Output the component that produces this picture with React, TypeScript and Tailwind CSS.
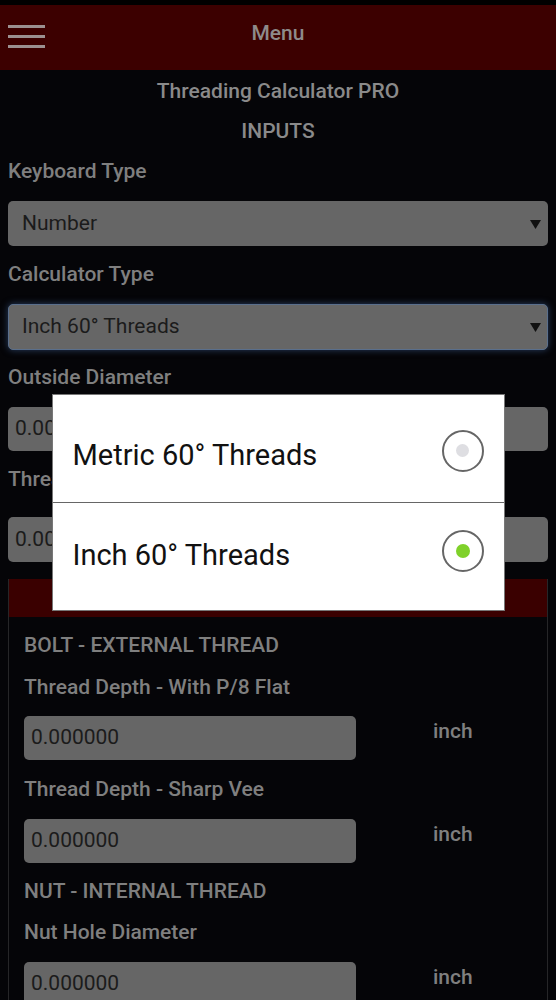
import { useState } from "react";

type Option = { key: string; label: string };

const calcOptions: Option[] = [
  { key: "metric", label: "Metric 60° Threads" },
  { key: "inch", label: "Inch 60° Threads" },
];

function SelectBox({ value, focused }: { value: string; focused?: boolean }) {
  return (
    <div
      className={
        focused
          ? "mt-[10px] flex h-[46px] items-center justify-between rounded-[5px] border border-[#5a6f8c] bg-[#666666] pl-[13px] pr-[6px] shadow-[0_0_7px_rgba(70,110,170,0.55)]"
          : "mt-[10px] flex h-[45px] items-center justify-between rounded-[5px] bg-[#666666] pl-[14px] pr-[7px]"
      }
    >
      <span className="text-[21px] text-[#1b1b1b]">{value}</span>
      <svg width="11" height="10" viewBox="0 0 11 10">
        <path d="M0 1h11L5.5 10z" fill="#111" />
      </svg>
    </div>
  );
}

function Label({ text, className }: { text: string; className?: string }) {
  return (
    <div
      className={
        "h-10 text-[21px] font-medium leading-10 text-[#7f7f7f] " +
        (className ?? "")
      }
    >
      {text}
    </div>
  );
}

function ResultRow({ className }: { className?: string }) {
  return (
    <div className={"flex items-start " + (className ?? "")}>
      <div className="flex h-[44px] w-[332px] items-center rounded-[5px] bg-[#666666] px-[7px] text-[21px] text-[#1b1b1b]">
        0.000000
      </div>
      <span className="ml-[77px] text-[21px] font-medium leading-[30px] text-[#7f7f7f]">
        inch
      </span>
    </div>
  );
}

export default function App() {
  const [calcType, setCalcType] = useState("inch");

  return (
    <div className="relative min-h-screen overflow-hidden bg-[#050508] font-['Roboto',sans-serif]">
      <div className="h-[5px] bg-black" />
      <header className="grid h-[65px] grid-cols-[1fr_auto_1fr] items-start bg-[#3c0000]">
        <div className="flex flex-col gap-[7px] pl-2 pt-[20px]">
          <span className="h-[3px] w-[37px] bg-[#9c9090]" />
          <span className="h-[3px] w-[37px] bg-[#9c9090]" />
          <span className="h-[3px] w-[37px] bg-[#9c9090]" />
        </div>
        <div className="pt-[14px] text-[21px] font-medium leading-[28px] text-[#8e8a8a]">
          Menu
        </div>
        <div />
      </header>

      <main className="px-2">
        <div className="mt-px h-10 text-center text-[21px] font-medium leading-10 text-[#8a8a8a]">
          Threading Calculator PRO
        </div>
        <div className="h-10 text-center text-[21px] font-medium leading-10 text-[#8a8a8a]">
          INPUTS
        </div>

        <Label text="Keyboard Type" />
        <SelectBox value="Number" />

        <Label text="Calculator Type" className="mt-2" />
        <SelectBox
          value={calcOptions.find((o) => o.key === calcType)?.label ?? ""}
          focused
        />

        <Label text="Outside Diameter" className="mt-[7px]" />
        <div className="mt-[10px] flex h-[44px] items-center rounded-[5px] bg-[#666666] px-[7px] text-[21px] text-[#1b1b1b]">
          0.000000
        </div>

        <Label text="Threads Per Inch" className="mt-2" />
        <div className="mt-[18px] flex h-[45px] items-center rounded-[5px] bg-[#666666] px-[7px] text-[21px] text-[#1b1b1b]">
          0.000000
        </div>

        <section className="mt-[17px] border border-t-0 border-[#262628]">
          <div className="h-[38px] bg-[#3a0000]" />
          <div className="px-[15px]">
            <Label text="BOLT - EXTERNAL THREAD" className="mt-2" />
            <Label text="Thread Depth - With P/8 Flat" className="mt-[2px]" />
            <ResultRow className="mt-[9px]" />
            <Label text="Thread Depth - Sharp Vee" className="mt-[9px]" />
            <ResultRow className="mt-[10px]" />
            <Label text="NUT - INTERNAL THREAD" className="mt-2" />
            <Label text="Nut Hole Diameter" className="mt-px" />
            <ResultRow className="mt-[10px]" />
            <div className="h-10" />
          </div>
        </section>
      </main>

      <div className="fixed inset-0 flex items-center justify-center pt-[5px]">
        <div className="w-[453px] border border-[#777] bg-white pb-[11px]">
          {calcOptions.map((opt, i) => (
            <button
              key={opt.key}
              type="button"
              onClick={() => setCalcType(opt.key)}
              className={
                "flex w-full items-center justify-between pl-[20px] pr-[20px] text-left " +
                (i === 0 ? "h-[108px] border-b border-[#666] pt-[4px]" : "h-[96px]")
              }
            >
              <span className="pt-[8px] text-[29px] leading-[36px] text-[#111]">
                {opt.label}
              </span>
              <span className="flex h-[42px] w-[42px] items-center justify-center rounded-full border-2 border-[#666]">
                {calcType === opt.key ? (
                  <span className="h-[14px] w-[14px] rounded-full bg-[#7fd12a]" />
                ) : (
                  <span className="h-[13px] w-[13px] rounded-full bg-[#dedee2]" />
                )}
              </span>
            </button>
          ))}
        </div>
      </div>
    </div>
  );
}
